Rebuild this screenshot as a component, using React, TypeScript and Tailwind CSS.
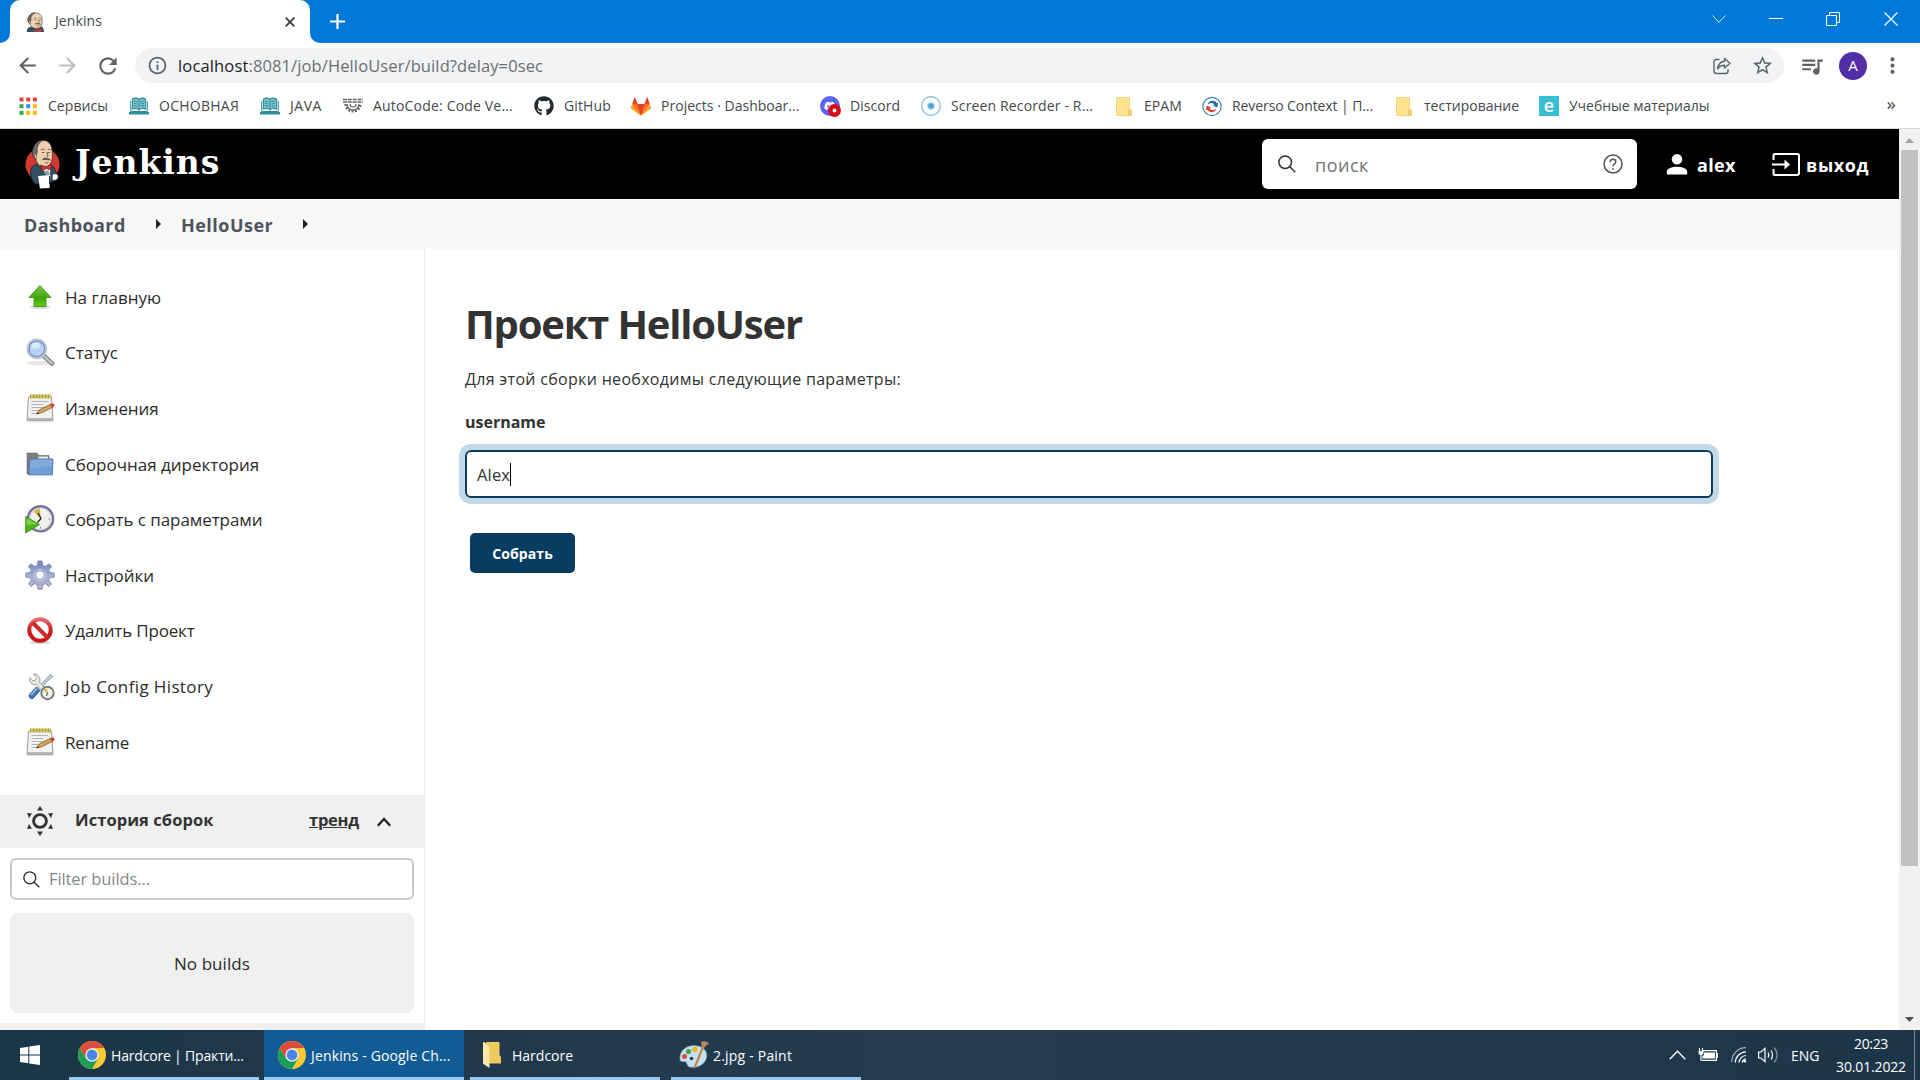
import React from "react";
import { FaGithub, FaDiscord } from "react-icons/fa";
import { MdArrowBack, MdArrowForward, MdRefresh, MdQueueMusic, MdStarBorder, MdMoreVert, MdInfoOutline } from "react-icons/md";

function T({ className = "", children }: { className?: string; children: React.ReactNode }) {
  return <span className={`block shrink-0 whitespace-pre ${className}`}>{children}</span>;
}

function JenkinsHead() {
  return (
    <g>
      <path d="M11 13C10 6 14 1.500 20 1.500C27 1 31 6 31 12C32 18 31 24 27 27C23 29 16 28 14 24C12 21 11 17 11 13Z" fill="#efd0b1" stroke="#33261d" strokeWidth=".8" />
      <path d="M10.500 19C7.500 15 8 11 10 8C12 3.500 16 1.300 20 1.300C16.500 3.500 14.500 6 13.800 9.500C14.500 12.500 13 16 12.500 19Z" fill="#6d6b6d" stroke="#33261d" strokeWidth=".7" />
      <path d="M11.500 14.500C9.500 14.500 10 19.500 13.500 20" fill="#efd0b1" stroke="#33261d" strokeWidth=".7" />
      <path d="M18 11C19.500 10 21 10 22.500 11M26 11C27 10 28.500 10 29.500 11M19.500 13.500H22M26.500 13.500H28.500M25 13C26 16 27 17 25 18" fill="none" stroke="#33261d" strokeWidth=".8" />
      <path d="M20 20.500C22 18.500 26 18.500 29 21C26 20.500 23 20.500 20 20.500Z" fill="#6d6b6d" stroke="#33261d" strokeWidth=".6" />
      <path d="M22.500 23.500C24 24.300 26 24.300 27 23.300" fill="none" stroke="#33261d" strokeWidth=".7" />
    </g>
  );
}

function JenkinsLogo() {
  return (
    <svg className="h-[50px] w-[35px] shrink-0" viewBox="0 0 40 50" preserveAspectRatio="none">
      <ellipse cx="20" cy="25.500" rx="19.500" ry="16.500" fill="#d33833" />
      <path d="M8 28C12 25 15 25 19 27L30 26C34 28 36 33 36 39L31 43L12 45C8 42 4 34 8 28Z" fill="#335061" stroke="#1c2b35" strokeWidth="1" />
      <path d="M19 28L30 27L28 36L23 34Z" fill="#fff" />
      <JenkinsHead />
      <path d="M18 26L24 28L30 25L30 31L24.500 29.500L19 32Z" fill="#d33833" stroke="#6b1210" strokeWidth=".8" />
      <path d="M22 32L27 31L28 36L24 36Z" fill="#8fa3b0" />
      <path d="M15 37L29 36L28 49L17 49.500Z" fill="#fff" />
      <path d="M31 36C33 34 38 34.500 38 37.500C38 41 34 42 31 41Z" fill="#fff" stroke="#1c2b35" strokeWidth=".8" />
      <path d="M28 37V45" stroke="#1c2b35" strokeWidth="1" />
    </svg>
  );
}

function Favicon() {
  return (
    <svg className="h-[20px] w-[18px] shrink-0" viewBox="6 0 28 34" preserveAspectRatio="none">
      <path d="M7 34C7 28 10 25 15 25L28 24C32 25 34 29 34 34Z" fill="#335061" />
      <JenkinsHead />
      <path d="M19 29L24 31L30 28L30 34L24 33L19 34Z" fill="#d33833" />
    </svg>
  );
}

function AppsGrid() {
  const c = ["#ea4335", "#ea4335", "#ea4335", "#34a853", "#4285f4", "#fbbc04", "#34a853", "#fbbc04", "#fbbc04"];
  return (
    <svg className="h-[18px] w-[18px]" viewBox="0 0 18 18">
      {c.map((f, i) => <rect key={i} x={(i % 3) * 6.700 + 0.500} y={Math.floor(i / 3) * 6.700 + 0.500} width="4" height="4" fill={f} />)}
    </svg>
  );
}

function BookIcon() {
  return (
    <svg className="h-[18px] w-[20px]" viewBox="0 0 20 18">
      <path d="M1.700 4V14.500H18.300V4" fill="none" stroke="#2e8f9a" strokeWidth="1" />
      <path d="M3.500 2C6 .8 8 1 10 2.300C12 1 14 .8 16.500 2V12C14 11 12 11 10 12.800C8 11 6 11 3.500 12Z" fill="#8ccbd3" stroke="#2e8f9a" strokeWidth="1.300" />
      <path d="M10 2.500V13M5 4L8.500 4.700M5 6.300L8.500 7M5 8.600L8.500 9.300M15 4L11.500 4.700M15 6.300L11.500 7M15 8.600L11.500 9.300" stroke="#2e8f9a" strokeWidth="1.200" />
      <rect x="0" y="15" width="20" height="2.500" fill="#2e8f9a" />
    </svg>
  );
}

function AutoCodeIcon() {
  return (
    <svg className="h-[18px] w-[20px]" viewBox="0 0 20 18" fill="none" stroke="#666">
      <path d="M0 2.500H20M0 5H20" strokeWidth="1.300" strokeDasharray="4 .8" />
      <path d="M2.500 7A7.500 7.500 0 0 0 17.500 7" strokeWidth="2.200" strokeDasharray="2 1.400" />
      <path d="M4 7A6 6 0 0 0 16 7" strokeWidth="1.300" />
      <path d="M7 7A3 3 0 0 0 13 7" strokeWidth="1.200" />
    </svg>
  );
}

function GitlabIcon() {
  return (
    <svg className="h-[19px] w-[20px]" viewBox="0 0 20 19">
      <path d="M10 18.500L0 11.200L3.800 0L6.500 7H13.500L16.200 0L20 11.200Z" fill="#fc6d26" />
      <path d="M10 18.500L6.300 7H13.700Z" fill="#e24329" />
      <path d="M3.800 0L6.500 7H1.400ZM16.200 0L18.600 7H13.500Z" fill="#e24329" />
      <path d="M1.400 7L0 11.200L10 18.500ZM18.600 7L20 11.200L10 18.500Z" fill="#fca326" />
    </svg>
  );
}

function DiscordIcon() {
  return (
    <div className="relative h-[20px] w-[20px]">
      <div className="flex h-[20px] w-[20px] items-center justify-center rounded-full bg-[#5865f2]"><FaDiscord className="size-[12px] text-white" /></div>
      <svg className="absolute -bottom-px -right-px h-[13px] w-[13px]" viewBox="0 0 12 12"><circle cx="6" cy="6" r="6" fill="#d90a17" /><circle cx="6" cy="6" r="1.800" fill="#fff" /></svg>
    </div>
  );
}

function RecorderIcon() {
  return (
    <svg className="h-[20px] w-[20px]" viewBox="0 0 20 20">
      <circle cx="10" cy="10" r="9.300" fill="#fff" stroke="#7db9dd" strokeWidth="1.200" />
      <circle cx="10" cy="10" r="4" fill="#b9def2" /><circle cx="10" cy="10" r="2.800" fill="#4ba3d6" />
    </svg>
  );
}

function FolderMark() {
  return (
    <svg className="mx-[2px] h-[19px] w-[16px]" viewBox="0 0 16 19">
      <path d="M1 .5H13.500V12.500C15 12.500 15.500 13 15.500 14V18.500H1C.6 18.500.5 18 .5 17.500V1Z" fill="#ffe38f" stroke="#e8c766" strokeWidth=".7" />
      <path d="M12.500 18V13.500C12.500 12.500 15.500 12.500 15.500 14V18Z" fill="#f6d36e" stroke="#dfb955" strokeWidth=".6" />
    </svg>
  );
}

function ReversoIcon() {
  return (
    <svg className="h-[21px] w-[21px]" viewBox="0 0 21 21">
      <circle cx="10.500" cy="10.500" r="9.600" fill="#fff" stroke="#3c7fb1" strokeWidth="1.200" />
      <path d="M6 8.500C7 4 13 3 15.500 7L17 6.500L16 11.500L11.500 9.500L13 8.500C11.500 6 8.500 6.500 6 8.500Z" fill="#1c6ba5" />
      <path d="M15 12.500C14 17 8 18 5.500 14L4 14.500L5 9.500L9.500 11.500L8 12.500C9.500 15 12.500 14.500 15 12.500Z" fill="#e2402c" />
    </svg>
  );
}

function EIcon() {
  return <div className="flex h-[20px] w-[20px] items-center justify-center bg-[#39bfd4] text-[18px] font-semibold leading-none text-white"><span className="-mt-[3px] block">e</span></div>;
}

const bookmarks = [
  { icon: <AppsGrid />, label: "Сервисы", box: "w-[111px]", cls: "tracking-[0.05px]" },
  { icon: <BookIcon />, label: "ОСНОВНАЯ", box: "w-[131px]", cls: "tracking-[0.25px]" },
  { icon: <BookIcon />, label: "JAVA", box: "w-[83px]", cls: "tracking-[0.55px]" },
  { icon: <AutoCodeIcon />, label: "AutoCode: Code Ve...", box: "w-[191px]", cls: "tracking-[0.18px]" },
  { icon: <FaGithub className="size-[20px] text-[#24292e]" />, label: "GitHub", box: "w-[97px]", cls: "tracking-[0.13px]" },
  { icon: <GitlabIcon />, label: "Projects · Dashboar...", box: "w-[189px]", cls: "tracking-[0.02px]" },
  { icon: <DiscordIcon />, label: "Discord", box: "w-[101px]", cls: "tracking-[0.03px]" },
  { icon: <RecorderIcon />, label: "Screen Recorder - R...", box: "w-[193px]", cls: "tracking-[0.14px]" },
  { icon: <FolderMark />, label: "EPAM", box: "w-[88px]", cls: "tracking-[0.08px]" },
  { icon: <ReversoIcon />, label: "Reverso Context | П...", box: "w-[192px]", cls: "tracking-[-0.09px]" },
  { icon: <FolderMark />, label: "тестирование", box: "w-[145px]", cls: "tracking-normal" },
  { icon: <EIcon />, label: "Учебные материалы", box: "w-[170px]", cls: "tracking-[-0.03px]" },
];

const svgCls = "h-[30px] w-[30px]";

function UpIcon() {
  return (
    <svg className={svgCls} viewBox="0 0 30 30">
      <defs><linearGradient id="gUp" x1="0" y1="0" x2="0" y2="1"><stop offset="0" stopColor="#7fc44a" /><stop offset=".6" stopColor="#3fa40d" /><stop offset="1" stopColor="#5fd016" /></linearGradient></defs>
      <ellipse cx="15" cy="25" rx="10" ry="2" fill="#000" opacity=".15" />
      <path d="M14.800 3.500L26 15.500H21V24.500H9V15.500H4Z" fill="url(#gUp)" stroke="#3d9413" strokeWidth=".9" strokeLinejoin="round" />
    </svg>
  );
}
function SearchGlass() {
  return (
    <svg className={svgCls} viewBox="0 0 30 30">
      <ellipse cx="14" cy="26" rx="12" ry="2" fill="#000" opacity=".1" />
      <path d="M19 19L27 26.500" stroke="#77787a" strokeWidth="4.600" strokeLinecap="round" />
      <path d="M20 20L27 26.500" stroke="#c4c5c6" strokeWidth="2.400" strokeLinecap="round" />
      <circle cx="11.800" cy="11.800" r="9.500" fill="#a9c8ec" stroke="#c3c7cd" strokeWidth="2" />
      <circle cx="11.800" cy="11.800" r="7.800" fill="#b7d3f2" stroke="#6d8fc2" strokeWidth="1.200" />
      <ellipse cx="10.500" cy="8.800" rx="4.500" ry="3" fill="#fff" opacity=".5" />
    </svg>
  );
}
function NotepadIcon() {
  return (
    <svg className={svgCls} viewBox="0 0 30 30">
      <ellipse cx="15" cy="28" rx="13" ry="1.500" fill="#000" opacity=".12" />
      <path d="M3.500 4H26.500L28 27.500H2Z" fill="#f1f1ef" stroke="#9a9a96" />
      <path d="M2.300 25H27.800L28 27.500H2Z" fill="#b9b9b5" />
      <rect x="5" y="1.500" width="21" height="3.800" fill="#b39c2c" />
      <path d="M7 1V5M10 1V5M13 1V5M16 1V5M19 1V5M22 1V5M25 1V5" stroke="#efe3a0" strokeWidth="1" />
      <path d="M6.500 8.500H23M6.500 11.500H18M6.500 14.500H21M6.500 17.500H16M6.500 20.500H14" stroke="#b4b4b4" strokeWidth="1" />
      <path d="M11.500 21L14.500 16.800L26 11.200L28 14L16.500 19.800Z" fill="#dca457" stroke="#7b5320" strokeWidth=".8" />
      <path d="M11.500 21L12.800 19.200L13.800 20.400Z" fill="#222" />
      <path d="M25 11.600L27.500 10.600C29 10.300 30 12.500 29 13.400L27 14.600Z" fill="#d9342b" />
    </svg>
  );
}
function FolderIcon() {
  return (
    <svg className={svgCls} viewBox="0 0 30 30">
      <path d="M2 4H12L14 6.500H24V10H27.500V25H2Z" fill="#7c7c7a" stroke="#6a6a68" strokeWidth=".6" />
      <path d="M13.500 7.500H23V10H13.500Z" fill="#e8e8e6" />
      <path d="M5 10H28L27.300 26H3.700Z" fill="#6f9fd4" stroke="#4a79b3" strokeWidth=".8" />
      <path d="M5.700 10.800H27.300L27 17C18 17 12 19 4.800 20Z" fill="#8cb4e0" opacity=".6" />
    </svg>
  );
}
function ClockPlayIcon() {
  return (
    <svg className={svgCls} viewBox="0 0 30 30">
      <circle cx="15.500" cy="14.800" r="12.600" fill="#f1f1ec" stroke="#77739a" strokeWidth="2.400" />
      <circle cx="15.500" cy="14.800" r="10.800" fill="none" stroke="#c9c7d6" strokeWidth=".8" />
      <path d="M15.500 14.800L8.500 7.500A10 10 0 0 1 15 4.800Z" fill="#d3b84c" />
      <path d="M13 9L16 14.500L12.500 18.500" fill="none" stroke="#222" strokeWidth="1.300" />
      <path d="M23.500 15H25M15.500 23V24.500" stroke="#777" />
      <path d="M.7 12.500L14.500 20.500L.7 29Z" fill="#4fb618" stroke="#2f7f0a" strokeWidth=".8" />
      <path d="M1.500 14L12 20L1.500 21Z" fill="#9ade6a" opacity=".6" />
    </svg>
  );
}
function GearIcon() {
  return (
    <svg className={svgCls} viewBox="0 0 30 30">
      <defs><linearGradient id="gGear" x1="0" y1="0" x2="0" y2="1"><stop offset="0" stopColor="#6f88b8" /><stop offset=".55" stopColor="#a7b1d4" /><stop offset="1" stopColor="#b3acd0" /></linearGradient></defs>
      <g fill="url(#gGear)" stroke="#6b7194" strokeWidth=".7">
        <path fillRule="evenodd" d="M13 1H17L17.700 5.500L20.400 6.600L24 3.800L26.600 6.400L23.700 10L24.800 12.600L29.300 13.200V17L24.800 17.600L23.700 20.200L26.600 23.800L24 26.400L20.400 23.700L17.700 24.700L17 29.300H13L12.300 24.700L9.600 23.700L6 26.400L3.400 23.800L6.300 20.200L5.200 17.600L.7 17V13.200L5.200 12.600L6.300 10L3.400 6.400L6 3.800L9.600 6.600L12.300 5.500ZM15 10.800A4.300 4.300 0 1 0 15 19.400A4.300 4.300 0 1 0 15 10.800Z" />
      </g>
      <circle cx="15" cy="15.100" r="5.400" fill="none" stroke="#d8dbec" strokeWidth="1" />
    </svg>
  );
}
function DeleteIcon() {
  return (
    <svg className={svgCls} viewBox="0 0 30 30">
      <defs><linearGradient id="gDel" x1="0" y1="0" x2="0" y2="1"><stop offset="0" stopColor="#e8696b" /><stop offset=".5" stopColor="#d01f22" /><stop offset="1" stopColor="#cf1316" /></linearGradient></defs>
      <ellipse cx="15" cy="27.500" rx="10" ry="1.300" fill="#000" opacity=".2" />
      <circle cx="15" cy="15" r="10.700" fill="#fff" stroke="url(#gDel)" strokeWidth="4" />
      <path d="M7.500 7.500L22.500 22.500" stroke="#cf2a2c" strokeWidth="4" />
    </svg>
  );
}
function ToolsIcon() {
  return (
    <svg className={svgCls} viewBox="0 0 30 30">
      <path d="M25.500 3L28 5.500L22.500 10L17 16.500L15 14.500L20.500 8.500Z" fill="#c3cad6" stroke="#8892a5" strokeWidth=".8" />
      <path d="M5 6.500C3.500 11 7 14.500 11 13.500L18 21L21 18.500L14.500 11C16 7 13 2.500 8.500 3L11.500 6.500L10 9.500L7.500 9.500Z" fill="#e6e6e4" stroke="#9a9a98" strokeWidth=".9" />
      <path d="M11.500 16L15 19.500L8 27.500C6 28.500 3 26 4.500 23.500Z" fill="#3e74ba" stroke="#234f8c" strokeWidth=".8" />
      <path d="M12 17.500L6 24" stroke="#a9c8ee" strokeWidth="1.300" />
      <circle cx="22.500" cy="22" r="6.200" fill="#f3f1e4" stroke="#77777c" strokeWidth="1.900" />
      <path d="M22.500 22L20 18.500M22.500 22L21.500 25" stroke="#333" strokeWidth=".9" />
      <path d="M22.500 22L18.800 19.500A4.500 4.500 0 0 1 22.300 17.500Z" fill="#d8bd55" />
    </svg>
  );
}

const tasks = [
  { icon: <UpIcon />, label: "На главную", cls: "tracking-normal" },
  { icon: <SearchGlass />, label: "Статус", cls: "tracking-normal" },
  { icon: <NotepadIcon />, label: "Изменения", cls: "tracking-[-0.1px]" },
  { icon: <FolderIcon />, label: "Сборочная директория", cls: "tracking-normal" },
  { icon: <ClockPlayIcon />, label: "Собрать с параметрами", cls: "tracking-[-0.07px]" },
  { icon: <GearIcon />, label: "Настройки", cls: "tracking-normal" },
  { icon: <DeleteIcon />, label: "Удалить Проект", cls: "tracking-[-0.18px]" },
  { icon: <ToolsIcon />, label: "Job Config History", cls: "tracking-[0.38px]" },
  { icon: <NotepadIcon />, label: "Rename", cls: "tracking-[-0.18px]" },
];

function ChromeIcon() {
  return (
    <svg className="h-[28px] w-[28px] shrink-0" viewBox="0 0 28 28">
      <circle cx="14" cy="14" r="14" fill="#fbc934" />
      <path d="M1.900 7A14 14 0 0 0 14 28L20 17.500L14 14L8 17.500Z" fill="#1c9e58" />
      <path d="M14 7H26.100A14 14 0 0 0 1.900 7L8 17.500Z" fill="#dd4b3e" />
      <circle cx="14" cy="14" r="6.700" fill="#f1f1f1" />
      <circle cx="14" cy="14" r="5.400" fill="#4a86ea" />
    </svg>
  );
}
function TaskFolder() {
  return (
    <svg className="h-[26px] w-[18px] shrink-0" viewBox="0 0 18 26">
      <path d="M3 0H15.500C16 0 16.500.5 16.500 1V13L18 15V21.500H3Z" fill="#f0c95c" />
      <path d="M0 0H1L6.500 4.500V26L.5 22C.2 21.700 0 21.500 0 21Z" fill="#ffe9a6" />
    </svg>
  );
}
function PaintIcon() {
  return (
    <svg className="h-[28px] w-[30px] shrink-0" viewBox="0 0 30 28">
      <path d="M1 17C1 8 10 3.500 18 5C26 6 29 12 27 18C25 24 18 27 11 26C7 25 9 21 6 20.500C4 20.300 1 22 1 17Z" fill="#c5e1f0" stroke="#8fbad0" strokeWidth=".7" />
      <circle cx="5.500" cy="15.500" r="2.500" fill="#e0473c" /><circle cx="9.500" cy="10.500" r="2.600" fill="#47a447" /><circle cx="16" cy="8.500" r="2.700" fill="#f1b52b" /><circle cx="12.500" cy="17.500" r="1.800" fill="#2b4256" />
      <path d="M26 4L16.500 27L15 27.500L14.800 26L24 3Z" fill="#c9803d" />
      <path d="M22 1C25-.5 29 .5 30 3L27 4.500L24.500 7.500L23 6.500Z" fill="#b98a5a" />
    </svg>
  );
}

export default function App() {
  return (
    <div className="flex h-[1080px] w-[1920px] flex-col overflow-hidden bg-white font-['Open_Sans',sans-serif] text-[#333]">
      {/* Tab strip */}
      <div className="flex h-[43px] shrink-0 bg-white">
        <div className="w-[10px] rounded-br-[10px] bg-[#0078d7]" />
        <div className="w-[300px] bg-[#0078d7]">
          <div className="flex h-full items-center rounded-t-[10px] bg-white pl-[16px] pr-[15px]">
            <Favicon />
            <T className="ml-[11px] -mt-[2px] text-[14px] leading-[20px] tracking-[0.09px] text-[#45494d]">Jenkins</T>
            <svg className="ml-auto h-[10px] w-[10px]" viewBox="0 0 10 10"><path d="M.7.7L9.300 9.300M9.300.7L.7 9.300" stroke="#3c4043" strokeWidth="1.900" /></svg>
          </div>
        </div>
        <div className="flex flex-1 items-center rounded-bl-[10px] bg-[#0078d7] pl-[20px]">
          <svg className="h-[15px] w-[15px]" viewBox="0 0 15 15"><path d="M7.500 0V15M0 7.500H15" stroke="#fff" strokeWidth="2.200" /></svg>
          <div className="mb-[6px] ml-auto flex items-center pr-[22px]">
            <svg className="h-[8px] w-[14px]" viewBox="0 0 14 8"><path d="M.5.5L7 7.300L13.500.5" fill="none" stroke="#d5e9fa" /></svg>
            <svg className="ml-[43px] h-[13px] w-[14px]" viewBox="0 0 14 13"><path d="M0 6.500H14" stroke="#fff" /></svg>
            <svg className="ml-[43px] h-[14px] w-[14px]" viewBox="0 0 14 14"><path d="M.5 3.500H10.500V13.500H.5ZM3.500 3.500V.5H13.500V10.500H10.500" fill="none" stroke="#fff" /></svg>
            <svg className="ml-[44px] h-[14px] w-[14px]" viewBox="0 0 14 14"><path d="M.5.5L13.500 13.500M13.500.5L.5 13.500" stroke="#fff" strokeWidth="1.200" /></svg>
          </div>
        </div>
      </div>

      {/* Address bar */}
      <div className="flex h-[45px] shrink-0 items-center">
        <MdArrowBack className="ml-[15px] size-[25px] text-[#5f6368]" />
        <MdArrowForward className="ml-[15px] size-[25px] text-[#bdc0c3]" />
        <MdRefresh className="ml-[15px] size-[26px] text-[#5f6368]" />
        <div className="ml-[14px] flex h-[35px] w-[1649px] items-center rounded-full bg-[#f1f3f4] pl-[12px] pr-[10px]">
          <MdInfoOutline className="size-[21px] text-[#5f6368]" />
          <T className="ml-[10px] text-[16.500px] leading-[24px] tracking-[0.15px] text-[#202124]">localhost</T>
          <T className="text-[16.500px] leading-[24px] tracking-[0.11px] text-[#6b6f73]">:8081/job/HelloUser/build?delay=0sec</T>
          <svg className="ml-auto h-[18px] w-[18px]" viewBox="0 0 18 18" fill="none" stroke="#5f6368" strokeWidth="1.400"><path d="M6.500 2.500H3.500C2 2.500 1 3.500 1 5V14C1 15.500 2 16.500 3.500 16.500H12.500C14 16.500 15 15.500 15 14V12" /><path d="M11.500 1.500L17 6.300L11.500 11V8.300C8.300 8.300 6 9.500 4.500 12C5 8 7.800 4.800 11.500 4.300Z" strokeLinejoin="round" /></svg>
          <MdStarBorder className="ml-[20px] size-[23px] text-[#5f6368]" />
        </div>
        <MdQueueMusic className="ml-[15px] size-[26px] text-[#5f6368]" />
        <div className="ml-[14px] flex h-[28px] w-[28px] items-center justify-center rounded-full bg-[#512da8] text-[15px] leading-none text-white">A</div>
        <MdMoreVert className="ml-[13px] size-[25px] text-[#5f6368]" />
      </div>

      {/* Bookmarks */}
      <div className="flex h-[41px] shrink-0 items-center border-b border-[#d5d7da] pb-[4px] pl-[18px]">
        {bookmarks.map((b, i) => (
          <div key={i} className={`flex shrink-0 items-center ${b.box}`}>
            <span className="flex w-[20px] shrink-0 items-center justify-center">{b.icon}</span>
            <T className={`ml-[10px] text-[14px] leading-[20px] text-[#45494d] ${b.cls}`}>{b.label}</T>
          </div>
        ))}
        <T className="ml-auto mr-[24px] -mt-[4px] text-[17px] font-semibold leading-[20px] text-[#5f6368]">»</T>
      </div>

      {/* Page viewport */}
      <div className="flex h-[901px] shrink-0">
        <div className="flex w-[1899px] shrink-0 flex-col overflow-hidden">
          <header className="flex h-[70px] shrink-0 items-center bg-black pl-[25px] text-white">
            <JenkinsLogo />
            <T className="-mt-[2px] ml-[15px] font-['DejaVu_Serif',serif] text-[33px] font-bold leading-[40px] tracking-[0.95px]">Jenkins</T>
            <div className="ml-auto flex h-[50px] w-[375px] items-center rounded-[6px] bg-white pl-[16px] pr-[14px]">
              <svg className="h-[18px] w-[18px]" viewBox="0 0 18 18" fill="none" stroke="#333" strokeWidth="1.500"><circle cx="7.200" cy="7.200" r="6.300" /><path d="M11.800 11.800L17.300 17.300" /></svg>
              <T className="ml-[19px] mt-[2px] text-[18px] leading-[24px] tracking-[0.5px] text-[#757575]">поиск</T>
              <svg className="ml-auto h-[20px] w-[20px]" viewBox="0 0 20 20" fill="none" stroke="#4d545d" strokeWidth="1.500"><circle cx="10" cy="10" r="9" /><path d="M7.200 8C7.200 4.400 12.800 4.500 12.800 7.800C12.800 10 10 10 10 12.300" /><path d="M10 14V15.800" /></svg>
            </div>
            <svg className="ml-[29px] h-[21px] w-[22px]" viewBox="0 0 22 21" fill="#fff"><circle cx="11" cy="5.200" r="5.200" /><path d="M.8 20.500V17.500C.8 14.500 6 12.700 11 12.700S21.200 14.500 21.200 17.500V20.500Z" /></svg>
            <T className="ml-[9px] mt-[2px] w-[75px] text-[18px] font-bold leading-[24px] tracking-[0.3px]">alex</T>
            <svg className="h-[23px] w-[28px]" viewBox="0 0 28 23" fill="none" stroke="#fff" strokeWidth="2"><path d="M1.500 7V2.500C1.500 1.500 2 1 3 1H25C26.300 1 27 1.700 27 2.700V20.300C27 21.300 26.300 22 25 22H3C2 22 1.500 21.500 1.500 20.500V16M0 11.500H14" /><path d="M12.500 6.500L18 11.500L12.500 16.500Z" fill="#fff" stroke="none" /></svg>
            <T className="ml-[6px] mt-[2px] w-[93px] text-[18px] font-bold leading-[24px] tracking-[0.6px]">выход</T>
          </header>

          <div className="flex h-[50px] shrink-0 items-center bg-[#f8f8f8] pl-[24px] text-[18px] font-bold text-[#4d545d]">
            <T className="mt-[2px] w-[132px] leading-[24px] tracking-[0.42px]">Dashboard</T>
            <svg className="h-[10px] w-[5px]" viewBox="0 0 5 10"><path d="M0 0L5 5L0 10Z" fill="#222" /></svg>
            <T className="ml-[20px] mt-[2px] w-[122px] leading-[24px] tracking-[0.48px]">HelloUser</T>
            <svg className="h-[10px] w-[5px]" viewBox="0 0 5 10"><path d="M0 0L5 5L0 10Z" fill="#222" /></svg>
          </div>

          <div className="flex h-[781px] shrink-0">
            <aside className="flex w-[425px] shrink-0 flex-col border-r border-[#ececec]">
              <nav className="flex h-[546px] shrink-0 flex-col pl-[25px] pt-[20px]">
                {tasks.map((t, i) => (
                  <div key={i} className="flex h-[55.600px] shrink-0 items-center">
                    {t.icon}
                    <T className={`ml-[10px] mt-[2px] text-[17px] leading-[24px] text-[#2b2b2b] ${t.cls}`}>{t.label}</T>
                  </div>
                ))}
              </nav>
              <div className="flex h-[53px] shrink-0 items-center bg-[#f0f0f0] pl-[27px] pr-[33px]">
                <svg className="-mt-px h-[30px] w-[26px]" viewBox="0 0 26 30"><circle cx="13" cy="15" r="6.400" fill="none" stroke="#333" strokeWidth="2.900" /><path d="M13 0L16 4.500H10ZM13 30L16 25.500H10ZM0 7L5 7.500L2 12ZM26 7L21 7.500L24 12ZM0 23L5 22.500L2 18ZM26 23L21 22.500L24 18Z" fill="#333" /></svg>
                <T className="-mt-[3px] ml-[22px] text-[16.500px] font-bold leading-[24px] tracking-[0.06px]">История сборок</T>
                <T className="-mt-[3px] ml-auto w-[50px] text-[16.500px] font-bold leading-[24px] tracking-[-0.25px] underline">тренд</T>
                <svg className="ml-[18px] h-[10px] w-[14px]" viewBox="0 0 14 10"><path d="M.8 8.800L7 2L13.200 8.800" fill="none" stroke="#222" strokeWidth="2.300" /></svg>
              </div>
              <div className="mx-[10px] mt-[10px] flex h-[42px] shrink-0 items-center rounded-[6px] border-2 border-[#c3ccd1] pl-[11px]">
                <svg className="h-[17px] w-[17px]" viewBox="0 0 18 18" fill="none" stroke="#333" strokeWidth="1.500"><circle cx="7.200" cy="7.200" r="6.300" /><path d="M11.800 11.800L17.300 17.300" /></svg>
                <T className="ml-[9px] text-[16.500px] leading-[24px] tracking-[-0.1px] text-[#85888b]">Filter builds...</T>
              </div>
              <div className="mx-[10px] mt-[13px] flex h-[100px] shrink-0 items-center justify-center rounded-[8px] bg-[#f0f0f0]">
                <T className="mt-[2px] text-[17px] leading-[24px] tracking-[0.07px] text-[#2b2b2b]">No builds</T>
              </div>
              <div className="mt-[10px] h-[7px] bg-[#f0f0f0]" />
            </aside>

            <main className="flex flex-1 flex-col pl-[40px] pt-[48px]">
              <T className="text-[40px] font-bold leading-[54px] tracking-[-1.2px]">Проект HelloUser</T>
              <T className="mt-[16px] text-[16px] leading-[24px] tracking-[0.31px]">Для этой сборки необходимы следующие параметры:</T>
              <T className="mt-[19px] text-[16px] font-bold leading-[24px]">username</T>
              <div className="mt-[16px] flex h-[48px] w-[1248px] shrink-0 items-center rounded-[6px] border-2 border-[#0b3c5d] pl-[10px] shadow-[0_0_0_6px_#c2d9e8]">
                <T className="mt-px text-[16.500px] leading-[24px] tracking-[0.15px]">Alex</T>
                <div className="h-[23px] w-px bg-black" />
              </div>
              <button className="ml-[5px] mt-[35px] flex h-[40px] w-[105px] shrink-0 items-center justify-center rounded-[5px] bg-[#073d60] text-white">
                <T className="mt-px text-[14px] font-bold leading-[20px] tracking-[0.1px]">Собрать</T>
              </button>
            </main>
          </div>
        </div>

        {/* Scrollbar */}
        <div className="flex flex-1 flex-col items-center bg-[#f1f1f1] pb-[8px] pt-[9px]">
          <svg className="h-[5px] w-[9px]" viewBox="0 0 9 5"><path d="M4.500 0L9 5H0Z" fill="#a3a3a3" /></svg>
          <div className="mt-[7px] h-[716px] w-[17px] bg-[#c1c1c1]" />
          <svg className="mt-auto h-[5px] w-[9px]" viewBox="0 0 9 5"><path d="M0 0H9L4.500 5Z" fill="#505050" /></svg>
        </div>
      </div>

      {/* Taskbar */}
      <footer className="flex h-[50px] shrink-0 items-center bg-linear-to-r from-[#1b3549] via-[#253c50] to-[#1c3548] text-[14px] text-white">
        <svg className="ml-[20px] h-[20px] w-[20px]" viewBox="0 0 20 20" fill="#fff"><path d="M0 3L8.300 1.800V9.500H0ZM9.300 1.600L20 0V9.500H9.300ZM0 10.500H8.300V18.200L0 17ZM9.300 10.500H20V20L9.300 18.400Z" /></svg>
        <div className="ml-[29px] flex h-full w-[190px] items-center border-b-[3px] border-[#99c9ee] pl-[9px] pt-[3px]"><ChromeIcon /><T className="ml-[5px] mt-px leading-[20px] tracking-[-0.18px]">Hardcore | Практи...</T></div>
        <div className="ml-[5px] flex h-full w-[200px] items-center border-b-[3px] border-[#99c9ee] bg-[#125c95] pl-[14px] pt-[3px]"><ChromeIcon /><T className="ml-[5px] mt-px leading-[20px] tracking-[0.15px]">Jenkins - Google Ch...</T></div>
        <div className="ml-[6px] flex h-full w-[190px] items-center border-b-[3px] border-[#99c9ee] pl-[13px] pt-[3px]"><TaskFolder /><T className="ml-[11px] mt-px leading-[20px]">Hardcore</T></div>
        <div className="ml-[11px] flex h-full w-[190px] items-center border-b-[3px] border-[#99c9ee] pl-[8px] pt-[3px]"><PaintIcon /><T className="ml-[4px] mt-px leading-[20px] tracking-[0.2px]">2.jpg - Paint</T></div>
        <div className="ml-auto flex h-full items-center">
          <svg className="h-[10px] w-[17px]" viewBox="0 0 17 10"><path d="M.7 9.200L8.500 1.200L16.300 9.200" fill="none" stroke="#fff" strokeWidth="1.300" /></svg>
          <svg className="ml-[12px] h-[14px] w-[20px]" viewBox="0 0 20 14"><path d="M4 2.700H18.400V12.300H4M18.400 5.500H19.500V9.500H18.400M1.500 0V3M4.500 0V3M3 7V13" fill="none" stroke="#fff" strokeWidth="1.200" /><path d="M.5 3H5.500V5C5.500 7.500.5 7.500.5 5ZM6 4.500H17V10.500H4.500V8L6 7Z" fill="#fff" /></svg>
          <svg className="ml-[13px] h-[16px] w-[16px]" viewBox="0 0 16 16" fill="none" stroke="#fff" strokeWidth="1.200"><path d="M.7 15A14.300 14.300 0 0 1 15 .7" opacity=".6" /><path d="M4.300 15.500A11 11 0 0 1 15 4.800M8 15.500A7.500 7.500 0 0 1 15 8.500M11 15.500A4.500 4.500 0 0 1 15 12" /><circle cx="13.800" cy="14.200" r="1.300" fill="#fff" stroke="none" /></svg>
          <svg className="ml-[11px] h-[18px] w-[20px]" viewBox="0 0 20 18" fill="none" stroke="#fff" strokeWidth="1.200"><path d="M.6 6H3L7 2.300V15.700L3 12H.6Z" /><path d="M10 6.500C11 8 11 10 10 11.500M13 4.500C15 7 15 11 13 13.500" /><path d="M16 1.500C20 5.500 20 12.500 16 16.500" opacity=".45" /></svg>
          <T className="ml-[13px] mt-[2px] w-[44px] leading-[20px]">ENG</T>
          <div className="flex w-[72px] flex-col items-center">
            <T className="leading-[23px] tracking-[-0.35px]">20:23</T>
            <T className="leading-[23px] tracking-[-0.15px]">30.01.2022</T>
          </div>
          <div className="ml-[7px] mr-[5px] h-full w-px bg-[#7d8b97]" />
        </div>
      </footer>
    </div>
  );
}
